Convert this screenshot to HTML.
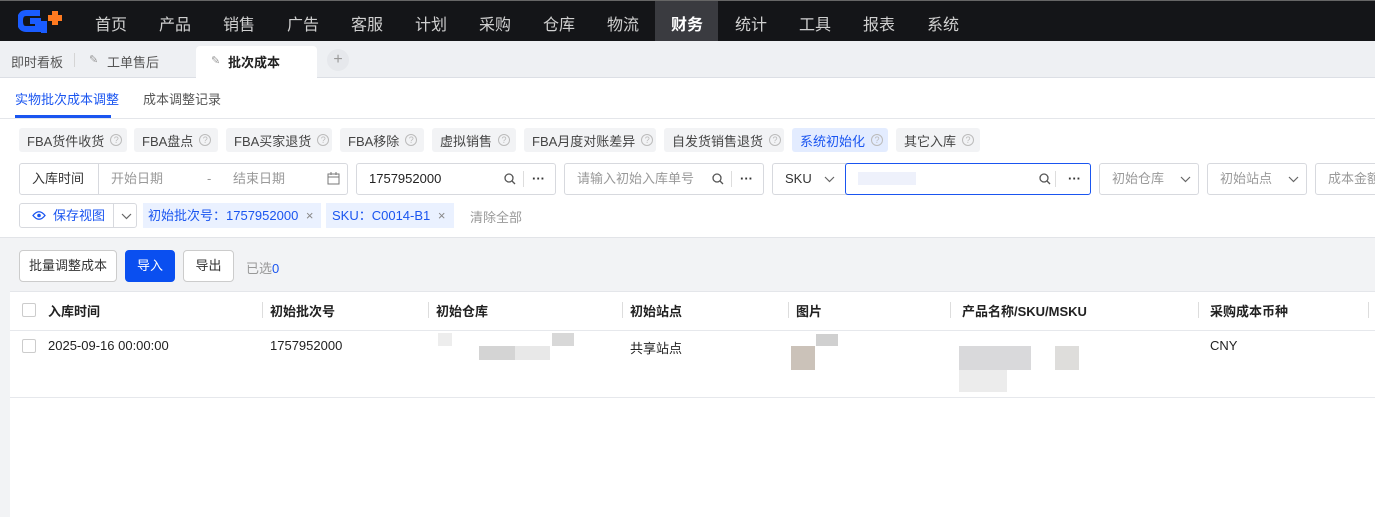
<!DOCTYPE html>
<html><head><meta charset="utf-8"><style>
*{box-sizing:border-box;margin:0;padding:0}
body{width:1375px;height:517px;overflow:hidden;font-family:"Liberation Sans","Noto Sans CJK SC",sans-serif;font-size:13px;color:#333;background:#fff;position:relative}
.a{position:absolute}
.nav{left:0;top:0;width:1375px;height:41px;background:#141518;border-top:1px solid #666}
.nav span{position:absolute;top:10px;font-size:16px;color:#d0d0d0}
.tabs{left:0;top:41px;width:1375px;height:37px;background:#eef0f3;border-bottom:1px solid #dcdfe5}
.chip{position:absolute;top:128px;height:24px;background:#f2f3f5;border-radius:3px;font-size:13px;color:#444;padding-left:8px;display:flex;align-items:center}
.q{display:inline-block;width:12px;height:12px;border:1px solid #bbb;border-radius:50%;font-size:9px;line-height:10px;text-align:center;color:#bbb;margin-left:6px;font-style:normal}
.box{position:absolute;top:163px;height:32px;border:1px solid #d7d9de;border-radius:3px;background:#fff;line-height:30px;font-size:13px}
.ph{color:#999}
.th{position:absolute;top:301px;font-weight:bold;font-size:13px;color:#222}
.sep{position:absolute;top:302px;width:1px;height:16px;background:#ddd}
.cb{position:absolute;width:14px;height:14px;border:1px solid #ccc;border-radius:2px;background:#fff}
.btn{position:absolute;top:250px;height:32px;border:1px solid #ccc;border-radius:4px;background:#fff;line-height:30px;text-align:center;font-size:13px}
.blur{position:absolute}
svg.i{position:absolute}
</style></head><body>
<div class="a nav">
<svg class="a" style="left:18px;top:8px" width="46" height="26" viewBox="0 0 46 26"><path d="M22 4H8Q2 4 2 12Q2 20 8 20H20V12H12" fill="none" stroke="#1a5cff" stroke-width="6"/><path d="M26 12V24" stroke="#1a5cff" stroke-width="6"/><rect x="34" y="2" width="6" height="14" fill="#ff7a20"/><rect x="30" y="6" width="14" height="6" fill="#ff7a20"/></svg>
<div class="a" style="left:655px;top:0;width:63px;height:40px;background:#3a3b40"></div>
<span style="left:95px">首页</span><span style="left:159px">产品</span><span style="left:223px">销售</span><span style="left:287px">广告</span><span style="left:351px">客服</span><span style="left:415px">计划</span><span style="left:479px">采购</span><span style="left:543px">仓库</span><span style="left:607px">物流</span><span style="left:671px;color:#fff;font-weight:bold">财务</span><span style="left:735px">统计</span><span style="left:799px">工具</span><span style="left:863px">报表</span><span style="left:927px">系统</span>
</div>
<div class="a tabs">
<span class="a" style="left:11px;top:11px;color:#555">即时看板</span>
<div class="a" style="left:74px;top:12px;width:1px;height:14px;background:#d5d5d5"></div>
<span class="a" style="left:89px;top:12px;color:#999;font-size:11px">✎</span>
<span class="a" style="left:107px;top:11px;color:#555">工单售后</span>
<div class="a" style="left:196px;top:5px;width:121px;height:33px;background:#fff;border-radius:4px 4px 0 0"></div>
<span class="a" style="left:211px;top:13px;color:#999;font-size:11px">✎</span>
<span class="a" style="left:228px;top:11px;color:#222;font-weight:bold">批次成本</span>
<div class="a" style="left:327px;top:8px;width:22px;height:22px;border-radius:50%;background:#e6e8ec;text-align:center;line-height:21px;color:#999;font-size:16px">+</div>
</div>
<span class="a" style="left:15px;top:89px;color:#1a55f0">实物批次成本调整</span>
<div class="a" style="left:15px;top:115px;width:96px;height:3px;background:#1a55f0"></div>
<span class="a" style="left:143px;top:89px;color:#555">成本调整记录</span>
<div class="a" style="left:0;top:118px;width:1375px;height:1px;background:#e4e6ea"></div>
<div class="chip" style="left:19px;width:108px">FBA货件收货<i class="q">?</i></div>
<div class="chip" style="left:134px;width:84px">FBA盘点<i class="q">?</i></div>
<div class="chip" style="left:226px;width:106px">FBA买家退货<i class="q">?</i></div>
<div class="chip" style="left:340px;width:84px">FBA移除<i class="q">?</i></div>
<div class="chip" style="left:432px;width:84px">虚拟销售<i class="q">?</i></div>
<div class="chip" style="left:524px;width:132px">FBA月度对账差异<i class="q">?</i></div>
<div class="chip" style="left:664px;width:120px">自发货销售退货<i class="q">?</i></div>
<div class="chip" style="left:792px;width:96px;background:#e3ecff;color:#1a55f0">系统初始化<i class="q">?</i></div>
<div class="chip" style="left:896px;width:84px">其它入库<i class="q">?</i></div>

<div class="box" style="left:19px;width:329px"><span style="position:absolute;left:12px">入库时间</span><div class="a" style="left:78px;top:0;width:1px;height:30px;background:#d7d9de"></div><span class="ph a" style="left:91px">开始日期</span><span class="ph a" style="left:187px">-</span><span class="ph a" style="left:213px">结束日期</span>
<svg class="i" style="left:307px;top:8px" width="13" height="13" viewBox="0 0 13 13"><rect x="1" y="2" width="11" height="10" fill="none" stroke="#777"/><path d="M1 5H12M4 0V3M9 0V3" stroke="#777"/></svg></div>
<div class="box" style="left:356px;width:200px"><span class="a" style="left:12px;color:#222">1757952000</span>
<svg class="i" style="left:147px;top:9px" width="12" height="12" viewBox="0 0 12 12"><circle cx="5" cy="5" r="4" fill="none" stroke="#555" stroke-width="1.3"/><path d="M8 8L11 11" stroke="#555" stroke-width="1.3"/></svg>
<div class="a" style="left:166px;top:7px;width:1px;height:16px;background:#ddd"></div><span class="a" style="left:175px;font-weight:bold">···</span></div>
<div class="box" style="left:564px;width:200px"><span class="ph a" style="left:12px">请输入初始入库单号</span>
<svg class="i" style="left:147px;top:9px" width="12" height="12" viewBox="0 0 12 12"><circle cx="5" cy="5" r="4" fill="none" stroke="#555" stroke-width="1.3"/><path d="M8 8L11 11" stroke="#555" stroke-width="1.3"/></svg>
<div class="a" style="left:166px;top:7px;width:1px;height:16px;background:#ddd"></div><span class="a" style="left:175px;font-weight:bold">···</span></div>
<div class="box" style="left:772px;width:80px;border-right:none;border-radius:3px 0 0 3px"><span class="a" style="left:12px">SKU</span>
<svg class="i" style="left:51px;top:12px" width="11" height="7" viewBox="0 0 11 7"><path d="M1 1L5.5 5.5L10 1" fill="none" stroke="#666" stroke-width="1.2"/></svg></div>
<div class="box" style="left:845px;width:246px;border-color:#1a55f0"><div class="a" style="left:12px;top:8px;width:58px;height:13px;background:#eef1fb"></div>
<svg class="i" style="left:193px;top:9px" width="12" height="12" viewBox="0 0 12 12"><circle cx="5" cy="5" r="4" fill="none" stroke="#555" stroke-width="1.3"/><path d="M8 8L11 11" stroke="#555" stroke-width="1.3"/></svg>
<div class="a" style="left:209px;top:7px;width:1px;height:16px;background:#ddd"></div><span class="a" style="left:222px;font-weight:bold">···</span></div>
<div class="box" style="left:1099px;width:100px"><span class="ph a" style="left:12px">初始仓库</span>
<svg class="i" style="left:80px;top:12px" width="11" height="7" viewBox="0 0 11 7"><path d="M1 1L5.5 5.5L10 1" fill="none" stroke="#666" stroke-width="1.2"/></svg></div>
<div class="box" style="left:1207px;width:100px"><span class="ph a" style="left:12px">初始站点</span>
<svg class="i" style="left:80px;top:12px" width="11" height="7" viewBox="0 0 11 7"><path d="M1 1L5.5 5.5L10 1" fill="none" stroke="#666" stroke-width="1.2"/></svg></div>
<div class="box" style="left:1315px;width:70px"><span class="ph a" style="left:12px">成本金额</span></div>

<div class="a" style="left:19px;top:203px;width:118px;height:25px;border:1px solid #d7d9de;border-radius:3px;line-height:23px">
<svg class="i" style="left:12px;top:6px" width="14" height="11" viewBox="0 0 14 11"><path d="M1 5.5Q7 -2 13 5.5Q7 13 1 5.5Z" fill="none" stroke="#1a55f0" stroke-width="1.3"/><circle cx="7" cy="5.5" r="1.8" fill="#1a55f0"/></svg>
<span class="a" style="left:33px;color:#1a55f0">保存视图</span><div class="a" style="left:93px;top:0;width:1px;height:23px;background:#d7d9de"></div>
<svg class="i" style="left:101px;top:9px" width="11" height="7" viewBox="0 0 11 7"><path d="M1 1L5.5 5.5L10 1" fill="none" stroke="#666" stroke-width="1.2"/></svg></div>
<div class="a" style="left:143px;top:203px;width:178px;height:25px;background:#eaf1ff;color:#1a55f0;line-height:25px;padding-left:5px">初始批次号：1757952000 <span style="color:#888;margin-left:4px">×</span></div>
<div class="a" style="left:326px;top:203px;width:128px;height:25px;background:#eaf1ff;color:#1a55f0;line-height:25px;padding-left:6px">SKU：C0014-B1 <span style="color:#888;margin-left:4px">×</span></div>
<span class="a" style="left:470px;top:207px;color:#999">清除全部</span>

<div class="a" style="left:0;top:237px;width:1375px;height:280px;background:#f2f3f5;border-top:1px solid #e2e4e8"></div>
<div class="btn" style="left:19px;width:98px">批量调整成本</div>
<div class="btn" style="left:125px;width:50px;background:#0a4ff0;border-color:#0a4ff0;color:#fff">导入</div>
<div class="btn" style="left:183px;width:51px">导出</div>
<span class="a" style="left:246px;top:258px;color:#999">已选<b style="color:#1a55f0;font-weight:normal">0</b></span>

<div class="a" style="left:10px;top:291px;width:1365px;height:226px;background:#fff;border-top:1px solid #e4e6ea"></div>
<div class="a" style="left:10px;top:330px;width:1365px;height:1px;background:#e6e8ec"></div>
<div class="a" style="left:10px;top:397px;width:1365px;height:1px;background:#e6e8ec"></div>
<div class="cb" style="left:22px;top:303px"></div>
<span class="th" style="left:48px">入库时间</span>
<div class="sep" style="left:262px"></div><span class="th" style="left:270px">初始批次号</span>
<div class="sep" style="left:428px"></div><span class="th" style="left:436px">初始仓库</span>
<div class="sep" style="left:622px"></div><span class="th" style="left:630px">初始站点</span>
<div class="sep" style="left:788px"></div><span class="th" style="left:796px">图片</span>
<div class="sep" style="left:950px"></div><span class="th" style="left:962px">产品名称/SKU/MSKU</span>
<div class="sep" style="left:1198px"></div><span class="th" style="left:1210px">采购成本币种</span>
<div class="sep" style="left:1368px"></div>
<div class="cb" style="left:22px;top:339px"></div>
<span class="a" style="left:48px;top:338px;color:#222">2025-09-16 00:00:00</span>
<span class="a" style="left:270px;top:338px;color:#222">1757952000</span>
<div class="blur" style="left:438px;top:333px;width:14px;height:13px;background:#ededed"></div>
<div class="blur" style="left:552px;top:333px;width:22px;height:13px;background:#d8d8d8"></div>
<div class="blur" style="left:479px;top:346px;width:36px;height:14px;background:#d4d4d4"></div>
<div class="blur" style="left:515px;top:346px;width:35px;height:14px;background:#e8e8e8"></div>
<span class="a" style="left:630px;top:338px;color:#222">共享站点</span>
<div class="blur" style="left:816px;top:334px;width:22px;height:12px;background:#d0d0d0"></div>
<div class="blur" style="left:791px;top:346px;width:24px;height:24px;background:#cbc2b9"></div>
<div class="blur" style="left:959px;top:346px;width:72px;height:24px;background:#d9d9db"></div>
<div class="blur" style="left:1055px;top:346px;width:24px;height:24px;background:#dedddb"></div>
<div class="blur" style="left:959px;top:370px;width:48px;height:22px;background:#ececec"></div>
<span class="a" style="left:1210px;top:338px;color:#222">CNY</span>
</body></html>
